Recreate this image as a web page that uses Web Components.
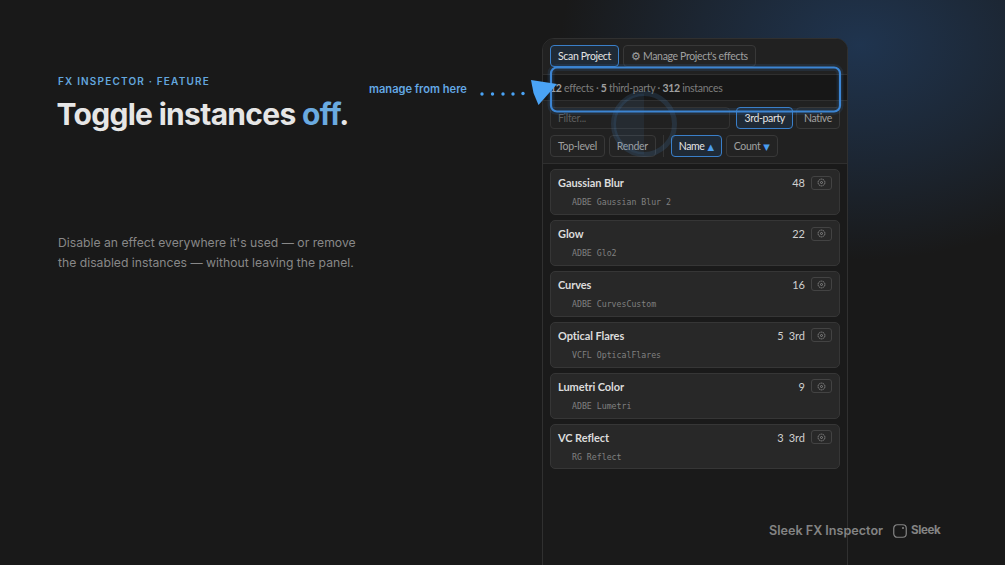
<!DOCTYPE html>
<html>
<head>
<meta charset="utf-8">
<style>
html, body { margin: 0; height: 100%; background: #191919; overflow: hidden; }
</style>
</head>
<body>
<fx-slide>
  <fx-intro slot="intro"></fx-intro>
  <fx-panel slot="panel">
    <fx-row name="Gaussian Blur" count="48" code="ADBE Gaussian Blur 2"></fx-row>
    <fx-row name="Glow" count="22" code="ADBE Glo2"></fx-row>
    <fx-row name="Curves" count="16" code="ADBE CurvesCustom"></fx-row>
    <fx-row name="Optical Flares" count="5" third code="VCFL OpticalFlares"></fx-row>
    <fx-row name="Lumetri Color" count="9" code="ADBE Lumetri"></fx-row>
    <fx-row name="VC Reflect" count="3" third code="RG Reflect"></fx-row>
  </fx-panel>
</fx-slide>
<script>
class fxSlide extends HTMLElement {
    constructor() {
        super();
        this.attachShadow({ mode: "open" }).innerHTML = `
        <style>
            :host {
                display: block;
                position: relative;
                width: 1005px;
                height: 565px;
                overflow: hidden;
                background:
                    radial-gradient(ellipse 300px 215px at 860px 45px, rgba(36, 72, 118, .58), rgba(36, 72, 118, .27) 55%, rgba(36, 72, 118, 0) 100%),
                    #191919;
            }
            .layout {
                display: flex;
                justify-content: space-between;
                height: 100%;
                box-sizing: border-box;
                padding: 38px 157px 0 58px;
            }
            .brand {
                position: absolute;
                left: 769px;
                top: 523px;
                display: flex;
                align-items: center;
                font: 600 12.600px "Inter", sans-serif;
                color: #848484;
            }
            .brand b {
                font-weight: 600;
                margin-right: 10px;
            }
            .brand svg { margin-right: 4px; }
            .brand span { font-size: 11.600px; font-weight: 700; letter-spacing: -.4px; margin-top: -2px; }
            .note {
                position: absolute;
                left: 369px;
                top: 82px;
                font: 600 11.100px "Inter", sans-serif;
                line-height: 15px;
                color: #64a9e6;
            }
            .marks { position: absolute; left: 0; top: 0; }
        </style>
        <div class="layout">
            <slot name="intro"></slot>
            <slot name="panel"></slot>
        </div>
        <div class="note">manage from here</div>
        <svg class="marks" width="1005" height="565" fill="none">
            <circle cx="644" cy="124" r="30.500" stroke="#4a8fd6" stroke-opacity=".16" stroke-width="5"/>
            <path d="M644 93.500a30.500 30.500 0 0 0 0 61z" fill="#4a8fd6" fill-opacity=".09"/>
            <rect x="551" y="67.500" width="289" height="44" rx="6" stroke="#3a86d8" stroke-opacity=".12" stroke-width="7"/>
            <rect x="551" y="67.500" width="289" height="44" rx="6" stroke="#3c85d3" stroke-width="2.200"/>
            <g fill="#4aa3f5">
                <circle cx="482" cy="94" r="1.700"/>
                <circle cx="492.500" cy="94" r="1.700"/>
                <circle cx="503" cy="94" r="1.700"/>
                <circle cx="513" cy="94" r="1.700"/>
                <circle cx="523" cy="93.500" r="1.700"/>
                <path d="M531 80L557 84L538.500 105L533.500 93z"/>
            </g>
        </svg>
        <div class="brand">
            <b>Sleek FX Inspector</b>
            <svg width="14" height="14" viewBox="0 0 14 14" fill="none">
                <rect x=".75" y=".75" width="12.500" height="12.500" rx="3.500" stroke="#858585" stroke-width="1.200"/>
                <circle cx="10" cy="4" r="1" fill="#858585"/>
            </svg>
            <span>Sleek</span>
        </div>
        `;
    }
}

class fxIntro extends HTMLElement {
    constructor() {
        super();
        this.attachShadow({ mode: "open" }).innerHTML = `
        <style>
            :host { display: block; font-family: "Inter", sans-serif; }
            .kicker {
                margin-top: 37px;
                font-size: 10px;
                line-height: 12px;
                font-weight: 600;
                letter-spacing: 1.180px;
                color: #63a6de;
            }
            h1 {
                margin: 9px 0 0 -1.500px;
                font-size: 30px;
                line-height: 36px;
                font-weight: 700;
                letter-spacing: -.7px;
                color: #e6e6e6;
            }
            h1 em { font-style: normal; color: #6aaae0; }
            p {
                margin: 101px 0 0;
                font-size: 12.200px;
                line-height: 19.500px;
                color: #888;
            }
        </style>
        <div class="kicker">FX INSPECTOR · FEATURE</div>
        <h1>Toggle instances <em>off</em>.</h1>
        <p>Disable an effect everywhere it's used — or remove<br>the disabled instances — without leaving the panel.</p>
        `;
    }
}

class fxPanel extends HTMLElement {
    constructor() {
        super();
        this.attachShadow({ mode: "open" }).innerHTML = `
        <style>
            :host {
                display: block;
                width: 306px;
                height: 560px;
                box-sizing: border-box;
                border: 1px solid #303030;
                border-radius: 12px;
                overflow: hidden;
                background: #1a1a1a;
                font: 400 10.500px "Lato", sans-serif;
                letter-spacing: -.34px;
                color: #8c8c8c;
            }
            .head { background: #212121; border-bottom: 1px solid #2f2f2f; }
            .tabs { display: flex; gap: 4px; padding: 6px 7px 7px; }
            button {
                font: inherit;
                letter-spacing: inherit;
                color: #a0a0a0;
                height: 22px;
                padding: 0 7px;
                border: 1px solid #383838;
                border-radius: 4px;
                background: #232323;
                white-space: nowrap;
            }
            button.on { color: #e4e4e4; border: 1.500px solid #3a7fc9; background: #1f2a36; }
            .status {
                background: #171717;
                border-top: 1px solid #2f2f2f;
                border-bottom: 1px solid #2f2f2f;
                padding: 6px 7px 5px;
                line-height: 14px;
                letter-spacing: -.29px;
                color: #7d7d7d;
            }
            .status b { color: #a0a0a0; font-weight: 700; }
            .filters { display: flex; gap: 3px; padding: 6px 7px 0; }
            .filter {
                flex: 1;
                height: 22px;
                box-sizing: border-box;
                margin-right: 3px;
                border: 1px solid #333;
                border-radius: 4px;
                padding: 3px 7px;
                color: #5e5e5e;
                line-height: 14px;
            }
            .chips { display: flex; gap: 4px; padding: 6px 7px 6px; }
            .sep { width: 1px; background: #343434; margin: 0 3px; }
            i { font: normal 8.500px "DejaVu Sans", sans-serif; color: #4a9eef; margin-left: 3px; }
            .list {
                display: flex;
                flex-direction: column;
                gap: 5px;
                padding: 5.300px 7px;
            }
        </style>
        <div class="head">
            <div class="tabs">
                <button class="on">Scan Project</button>
                <button>⚙ Manage Project's effects</button>
            </div>
            <div class="status"><b>12</b> effects · <b>5</b> third-party · <b>312</b> instances</div>
            <div class="filters">
                <div class="filter">Filter...</div>
                <button class="on">3rd-party</button>
                <button>Native</button>
            </div>
            <div class="chips">
                <button>Top-level</button>
                <button>Render</button>
                <div class="sep"></div>
                <button class="on">Name<i>▲</i></button>
                <button>Count<i>▼</i></button>
            </div>
        </div>
        <div class="list"><slot></slot></div>
        `;
    }
}

class fxRow extends HTMLElement {
    constructor() {
        super();
        this.attachShadow({ mode: "open" });
    }

    connectedCallback() {
        const third = this.hasAttribute("third") ? `<span>3rd</span>` : "";
        this.shadowRoot.innerHTML = `
        <style>
            :host {
                display: block;
                height: 45.850px;
                box-sizing: border-box;
                padding: 3.500px 7px 0;
                border: 1px solid #363636;
                border-radius: 5px;
                background: #282828;
            }
            .top { display: flex; align-items: center; height: 18px; color: #dcdcdc; letter-spacing: 0; }
            .name { flex: 1; font-size: 11px; font-weight: 700; letter-spacing: -.08px; }
            .count { display: flex; gap: 5px; font-size: 11px; color: #d0d0d0; }
            .gear {
                display: flex;
                align-items: center;
                justify-content: center;
                width: 19px;
                height: 12px;
                margin-left: 6px;
                border: 1px solid #434343;
                border-radius: 3px;
            }
            .code {
                margin: 4.500px 0 0 14px;
                font: 8.220px/12px "DejaVu Sans Mono", monospace;
                letter-spacing: 0;
                color: #808080;
            }
        </style>
        <div class="top">
            <div class="name">${this.getAttribute("name")}</div>
            <div class="count"><span>${this.getAttribute("count")}</span>${third}</div>
            <div class="gear">
                <svg width="9" height="9" viewBox="0 0 9 9" fill="none" stroke="#858585">
                    <circle cx="4.500" cy="4.500" r="3.400" stroke-dasharray="1.600 .5"/>
                    <circle cx="4.500" cy="4.500" r="1"/>
                </svg>
            </div>
        </div>
        <div class="code">${this.getAttribute("code")}</div>
        `;
    }
}

customElements.define("fx-slide", fxSlide);
customElements.define("fx-intro", fxIntro);
customElements.define("fx-panel", fxPanel);
customElements.define("fx-row", fxRow);
</script>
</body>
</html>
